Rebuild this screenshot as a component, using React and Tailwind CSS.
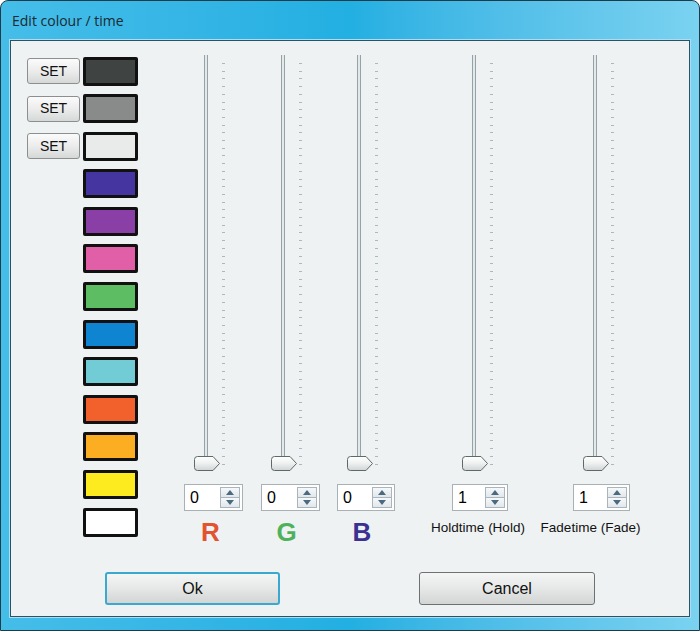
const swatches = [
  { bg: 'bg-[#3f4443]', set: true },
  { bg: 'bg-[#898b8a]', set: true },
  { bg: 'bg-[#e9ebeb]', set: true },
  { bg: 'bg-[#4535a0]' },
  { bg: 'bg-[#8a3fa6]' },
  { bg: 'bg-[#e05fa6]' },
  { bg: 'bg-[#5cbd62]' },
  { bg: 'bg-[#0f84d0]' },
  { bg: 'bg-[#72ccd6]' },
  { bg: 'bg-[#f2602c]' },
  { bg: 'bg-[#fcae22]' },
  { bg: 'bg-[#fdeb1f]' },
  { bg: 'bg-[#ffffff]' },
];

const sliders = [
  { id: 'r', value: '0', label: 'R', big: true, color: 'text-[#e2532f]', box: 'ml-[46px] w-[59px]', labelCls: 'mr-[6px]' },
  { id: 'g', value: '0', label: 'G', big: true, color: 'text-[#4fb25a]', box: 'ml-[18px] w-[59px]', labelCls: 'mr-[8px]' },
  { id: 'b', value: '0', label: 'B', big: true, color: 'text-[#3b3193]', box: 'ml-[17px] w-[58px]', labelCls: 'mr-[8px]' },
  { id: 'hold', value: '1', label: 'Holdtime (Hold)', box: 'ml-[57px] w-[56px]', labelCls: 'mr-[4px]' },
  { id: 'fade', value: '1', label: 'Fadetime (Fade)', box: 'ml-[65px] w-[57px]', labelCls: 'mr-[22px]' },
];

const ticks = Array.from({ length: 53 }, (_, i) => i);

function Slider({ id }) {
  return (
    <div className="relative h-[418px] w-full">
      {/* track */}
      <div className="absolute left-[20px] top-0 bottom-[7px] w-[4px] border-x border-[#97a2a6] bg-[#e3e8ea]" />
      {/* tick marks */}
      <div className="absolute left-[38px] top-[8px] bottom-[8px] flex flex-col justify-between">
        {ticks.map((i) => (
          <div key={i} className="h-px w-[3px] bg-[#aeb7bb]" />
        ))}
      </div>
      {/* thumb */}
      <svg className="absolute left-[10px] bottom-[2px]" width="27" height="15" viewBox="0 0 27 15">
        <defs>
          <linearGradient id={`thumb-${id}`} x1="0" y1="0" x2="0" y2="1">
            <stop offset="0" stopColor="#ffffff" />
            <stop offset="0.5" stopColor="#eef0f0" />
            <stop offset="1" stopColor="#cfd4d4" />
          </linearGradient>
        </defs>
        <path
          d="M3.5 0.5 H19 L25.5 7.5 L19 14.5 H3.5 Q0.5 14.5 0.5 11.5 V3.5 Q0.5 0.5 3.5 0.5 Z"
          fill={`url(#thumb-${id})`}
          stroke="#5f6968"
        />
      </svg>
    </div>
  );
}

function SpinBox({ value }) {
  return (
    <div className="mt-[11px] flex h-[27px] w-full items-center border border-[#a9b1b5] bg-white pl-[5px] pr-[2px]">
      <span className="flex-1 text-[16px] leading-none text-black">{value}</span>
      <div className="flex h-[21px] w-[20px] flex-col border border-[#aab4bc]">
        <div className="flex flex-1 items-center justify-center border-b border-[#aab4bc] bg-gradient-to-b from-[#f7f9fa] to-[#e1e7eb]">
          <svg width="8" height="5" viewBox="0 0 8 5"><path d="M0 5 L4 0 L8 5 Z" fill="#4b6a80" /></svg>
        </div>
        <div className="flex flex-1 items-center justify-center bg-gradient-to-b from-[#f7f9fa] to-[#e1e7eb]">
          <svg width="8" height="5" viewBox="0 0 8 5"><path d="M0 0 L8 0 L4 5 Z" fill="#4b6a80" /></svg>
        </div>
      </div>
    </div>
  );
}

export default function App() {
  return (
    <div className="h-[632px] w-[700px] bg-white font-['Liberation_Sans',Arial,sans-serif]">
      <div className="flex h-[631px] w-[700px] flex-col rounded-t-[8px] border border-[#1d3c4a] bg-gradient-to-r from-[#45bde9] via-[#22afe2] to-[#7ad2f0]">
        {/* Title bar */}
        <div className="flex h-[39px] items-center pl-[11px] font-['Open_Sans',sans-serif] text-[14px] text-[#1b2a30]">
          Edit colour / time
        </div>

        {/* Client area */}
        <div className="mx-[9px] flex h-[577px] flex-col border border-[#2a5466] bg-[#eff2f3] pt-[14px] shadow-[0_0_0_1px_#a9def2]">
          <div className="flex h-[517px]">
            {/* Colour swatches */}
            <div className="flex flex-col gap-[9.6px] pl-[16px] pt-[2px]">
              {swatches.map((s, i) => (
                <div key={i} className="flex h-[28px] items-center gap-[3px]">
                  {s.set ? (
                    <button className="h-[26px] w-[53px] rounded-[3px] border border-[#8c8f90] bg-gradient-to-b from-[#fbfbfb] via-[#ececec] to-[#d6d8d8] text-[14px] text-[#111]">
                      SET
                    </button>
                  ) : (
                    <div className="w-[53px]" />
                  )}
                  <div className={`h-[29px] w-[55px] rounded-[2px] border-[3px] border-[#111] ${s.bg}`} />
                </div>
              ))}
            </div>

            {/* Sliders */}
            {sliders.map((s) => (
              <div key={s.id} className={`flex flex-col ${s.box}`}>
                <Slider id={s.id} />
                <SpinBox value={s.value} />
                {s.big ? (
                  <div className={`mt-[6px] flex justify-center text-[26px] font-bold leading-[30px] ${s.color} ${s.labelCls}`}>
                    {s.label}
                  </div>
                ) : (
                  <div className="mt-[9px] flex justify-center">
                    <span className={`whitespace-nowrap text-[13.5px] leading-[16px] text-[#111] ${s.labelCls}`}>{s.label}</span>
                  </div>
                )}
              </div>
            ))}
          </div>

          {/* Buttons */}
          <div className="flex h-[33px]">
            <button className="ml-[94px] h-[33px] w-[175px] rounded-[3px] border-2 border-[#3ba9cf] bg-gradient-to-b from-[#f4f5f5] via-[#e6e7e7] to-[#d3d5d5] text-[16px] text-[#111]">
              Ok
            </button>
            <button className="ml-[139px] h-[33px] w-[176px] rounded-[3px] border border-[#6e7172] bg-gradient-to-b from-[#f4f5f5] via-[#e6e7e7] to-[#d3d5d5] text-[16px] text-[#111]">
              Cancel
            </button>
          </div>
        </div>
      </div>
    </div>
  );
}
